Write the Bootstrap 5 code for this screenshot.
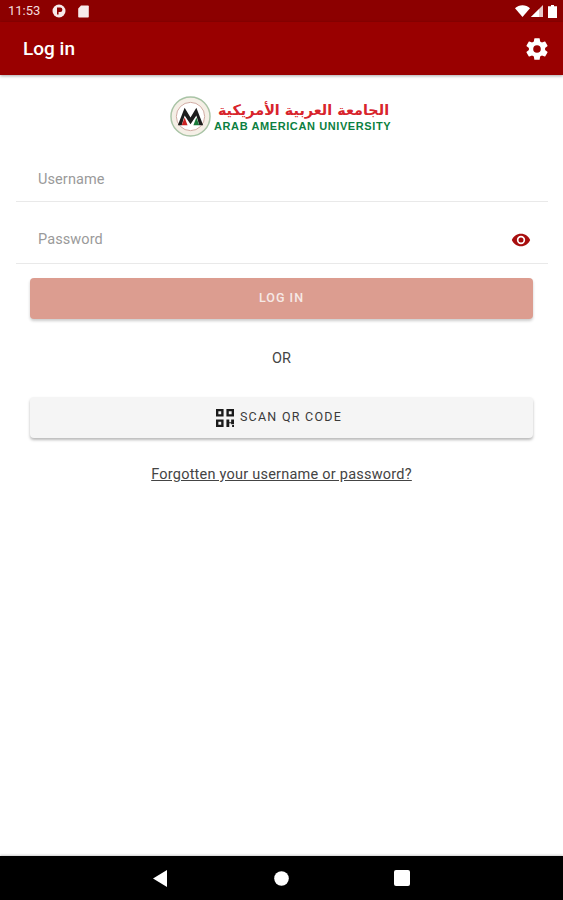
<!DOCTYPE html>
<html lang="en">
<head>
<meta charset="utf-8">
<title>Log in</title>
<link href="https://cdn.jsdelivr.net/npm/bootstrap@5.3.0/dist/css/bootstrap.min.css" rel="stylesheet">
<style>
html,body{height:100%}
body{font-family:Roboto,"Liberation Sans",sans-serif;background:#fff;color:#333;width:563px;height:900px;overflow:hidden}
.shell{height:900px}
.statusline{height:22px;background:#8c0000;color:#f3dcdc;font-size:13px;padding:0 6px 0 8px}
.appline{height:53px;background:#990000;color:#fff;padding:0 13px 0 23px;box-shadow:0 1px 3px rgba(0,0,0,.35);position:relative;z-index:2}
.apptitle{font-size:19px;font-weight:500;line-height:1;margin-top:0}
.brandrow{height:82px;padding-top:0}
.brandgap{gap:3px}
.ar-name{font-family:"DejaVu Sans",sans-serif;font-weight:700;color:#d8242c;font-size:14.4px;line-height:18px;width:179px;text-align:center;white-space:nowrap}
.en-name{font-family:"Liberation Sans",sans-serif;font-weight:700;color:#0c7f3f;font-size:11px;line-height:11px;letter-spacing:.6px;white-space:nowrap;margin-top:2px}
.fieldline{margin:0 15px 0 16px;height:62px;border-bottom:1px solid #e9e9e9;padding:15px 17px 0 22px;font-size:14.5px;letter-spacing:.1px;color:#9a9a9a}
.fieldline.userline{height:45px;padding-top:2px}
.btn.loginbtn{display:block;width:503px;height:41px;margin:14px 0 0 30px;background:#dc9d90;border:0;border-radius:4px;color:#f6e9e6;font-size:12.5px;font-weight:500;letter-spacing:1px;box-shadow:0 2px 3px rgba(0,0,0,.2);padding:0}
.ortext{margin-top:31px;height:18px;font-size:14.5px;line-height:18px;color:#444;text-align:center}
.btn.qrbtn{width:503px;height:41px;margin:29px 0 0 30px;background:#f5f5f5;border:0;border-radius:4px;color:#3a3a3a;font-size:12.5px;font-weight:400;letter-spacing:1.25px;box-shadow:0 2px 3px rgba(0,0,0,.28);padding:0 5px 0 0}
.forgot{margin-top:28px;text-align:center;font-size:14.5px;line-height:18px;letter-spacing:.23px}
.forgot a{color:#444}
.navline{height:44px;background:#000;box-shadow:0 -1px 2px rgba(0,0,0,.2);position:relative}
.navslot{width:120px}
.backslot{padding-right:4px}
.sigicon{margin:0 5px 0 1px}
.qricon{margin-right:2px}
</style>
</head>
<body>
<div class="shell d-flex flex-column">
  <div class="statusline d-flex align-items-center justify-content-between">
    <div class="d-flex align-items-center gap-2">
      <span>11:53</span>
      <svg width="14" height="14" viewBox="0 0 14 14" class="ms-1"><circle cx="7" cy="7" r="6.500" fill="#f7eaea"/><path d="M5 3.500h3.200a2.200 2.200 0 0 1 0 4.400H6.600v2.600H5z" fill="#8c0000"/></svg>
      <svg width="11" height="13" viewBox="0 0 11 13" class="ms-1"><path d="M3 .5h7a.8.8 0 0 1 .8.8v10.400a.8.8 0 0 1-.8.8H1a.8.8 0 0 1-.8-.8V3.500z" fill="#f7eaea"/></svg>
    </div>
    <div class="d-flex align-items-center">
      <svg width="15" height="12" viewBox="0 0 15 12"><path d="M0 3.200C4-.8 11-.8 15 3.200L7.500 12z" fill="#fff"/></svg>
      <svg width="12" height="12" viewBox="0 0 12 12" class="sigicon"><path d="M12 0v12H0z" fill="#e8c8c8"/><path d="M8 4.200V12H0z" fill="#fff"/></svg>
      <svg width="9" height="13" viewBox="0 0 9 13"><path d="M3 0h3v1.200h3V13H0V1.200h3z" fill="#fff"/></svg>
    </div>
  </div>
  <div class="appline d-flex align-items-center justify-content-between">
    <span class="apptitle">Log in</span>
    <svg width="26" height="26" viewBox="0 0 24 24"><path fill="#fff" d="M19.430 12.980c.04-.32.07-.64.07-.98s-.03-.66-.07-.98l2.110-1.650c.19-.15.24-.42.12-.64l-2-3.460c-.12-.22-.39-.3-.61-.22l-2.490 1c-.52-.4-1.080-.73-1.690-.98l-.38-2.650A.488.488 0 0 0 14 2h-4c-.25 0-.46.18-.49.42l-.38 2.650c-.61.25-1.170.59-1.690.98l-2.490-1c-.23-.09-.49 0-.61.22l-2 3.460c-.13.22-.07.49.12.64l2.110 1.650c-.04.32-.07.65-.07.98s.03.66.07.98l-2.110 1.650c-.19.15-.24.42-.12.64l2 3.460c.12.22.39.3.61.22l2.490-1c.52.4 1.080.73 1.690.98l.38 2.650c.03.24.24.42.49.42h4c.25 0 .46-.18.49-.42l.38-2.650c.61-.25 1.170-.59 1.690-.98l2.490 1c.23.09.49 0 .61-.22l2-3.460c.12-.22.07-.49-.12-.64l-2.110-1.650zM12 15.500a3.500 3.500 0 1 1 0-7 3.500 3.500 0 0 1 0 7z"/></svg>
  </div>
  <main class="flex-grow-1">
    <div class="brandrow d-flex align-items-center justify-content-center brandgap">
      <svg width="41" height="41" viewBox="0 0 42 42">
        <circle cx="21" cy="21" r="20" fill="#f5efe6" stroke="#a9c4a6" stroke-width="1.500"/>
        <circle cx="21" cy="21" r="14.500" fill="#fff" stroke="#cfa9a0" stroke-width="1"/>
        <path d="M8 30 15 12l6 10 6-10 7 18h-4l-3-10-6 9-6-9-3 10z" fill="#1d1d1d"/>
        <path d="M12 30l3-8 3 8z" fill="#c22"/><path d="M24 30l3-8 3 8z" fill="#1a7a3a"/>
      </svg>
      <div>
        <div class="ar-name" dir="rtl">الجامعة العربية الأمريكية</div>
        <div class="en-name">ARAB AMERICAN UNIVERSITY</div>
      </div>
    </div>
    <div class="fieldline userline d-flex align-items-center">Username</div>
    <div class="fieldline d-flex align-items-center justify-content-between">
      <span>Password</span>
      <svg width="20" height="20" viewBox="0 0 24 24"><path fill="#a80f0f" d="M12 4.500C7 4.500 2.730 7.610 1 12c1.730 4.390 6 7.500 11 7.500s9.270-3.110 11-7.500c-1.730-4.390-6-7.500-11-7.500zM12 17a5 5 0 1 1 0-10 5 5 0 0 1 0 10zm0-8a3 3 0 1 0 0 6 3 3 0 0 0 0-6z"/></svg>
    </div>
    <button type="button" class="btn loginbtn">LOG IN</button>
    <div class="ortext">OR</div>
    <button type="button" class="btn qrbtn d-flex align-items-center justify-content-center gap-1">
      <svg width="18" height="18" viewBox="0 0 19 19" class="qricon"><path fill="#1b1b1b" fill-rule="evenodd" d="M0 0h8v8H0zM2.500 2.500v3h3v-3zM11 0h8v8h-8zM13.500 2.500v3h3v-3zM0 11h8v8H0zM2.500 13.500v3h3v-3zM11 11h3v3h2v-3h3v5h-3v-1h-2v4h-3zM17 17h2v2h-2z"/></svg>
      <span>SCAN QR CODE</span>
    </button>
    <div class="forgot"><a href="#">Forgotten your username or password?</a></div>
  </main>
  <div class="navline d-flex align-items-center justify-content-center">
    <div class="navslot backslot d-flex justify-content-center"><svg width="16" height="17" viewBox="0 0 16 17"><path d="M15 0v17L1 8.500z" fill="#fff"/></svg></div>
    <div class="navslot d-flex justify-content-center"><svg width="15" height="15" viewBox="0 0 15 15"><circle cx="7.500" cy="7.500" r="7.300" fill="#fff"/></svg></div>
    <div class="navslot d-flex justify-content-center"><svg width="16" height="16" viewBox="0 0 16 16"><rect width="16" height="16" rx="2" fill="#fff"/></svg></div>
  </div>
</div>
<script src="https://cdn.jsdelivr.net/npm/bootstrap@5.3.0/dist/js/bootstrap.bundle.min.js"></script>
</body>
</html>
